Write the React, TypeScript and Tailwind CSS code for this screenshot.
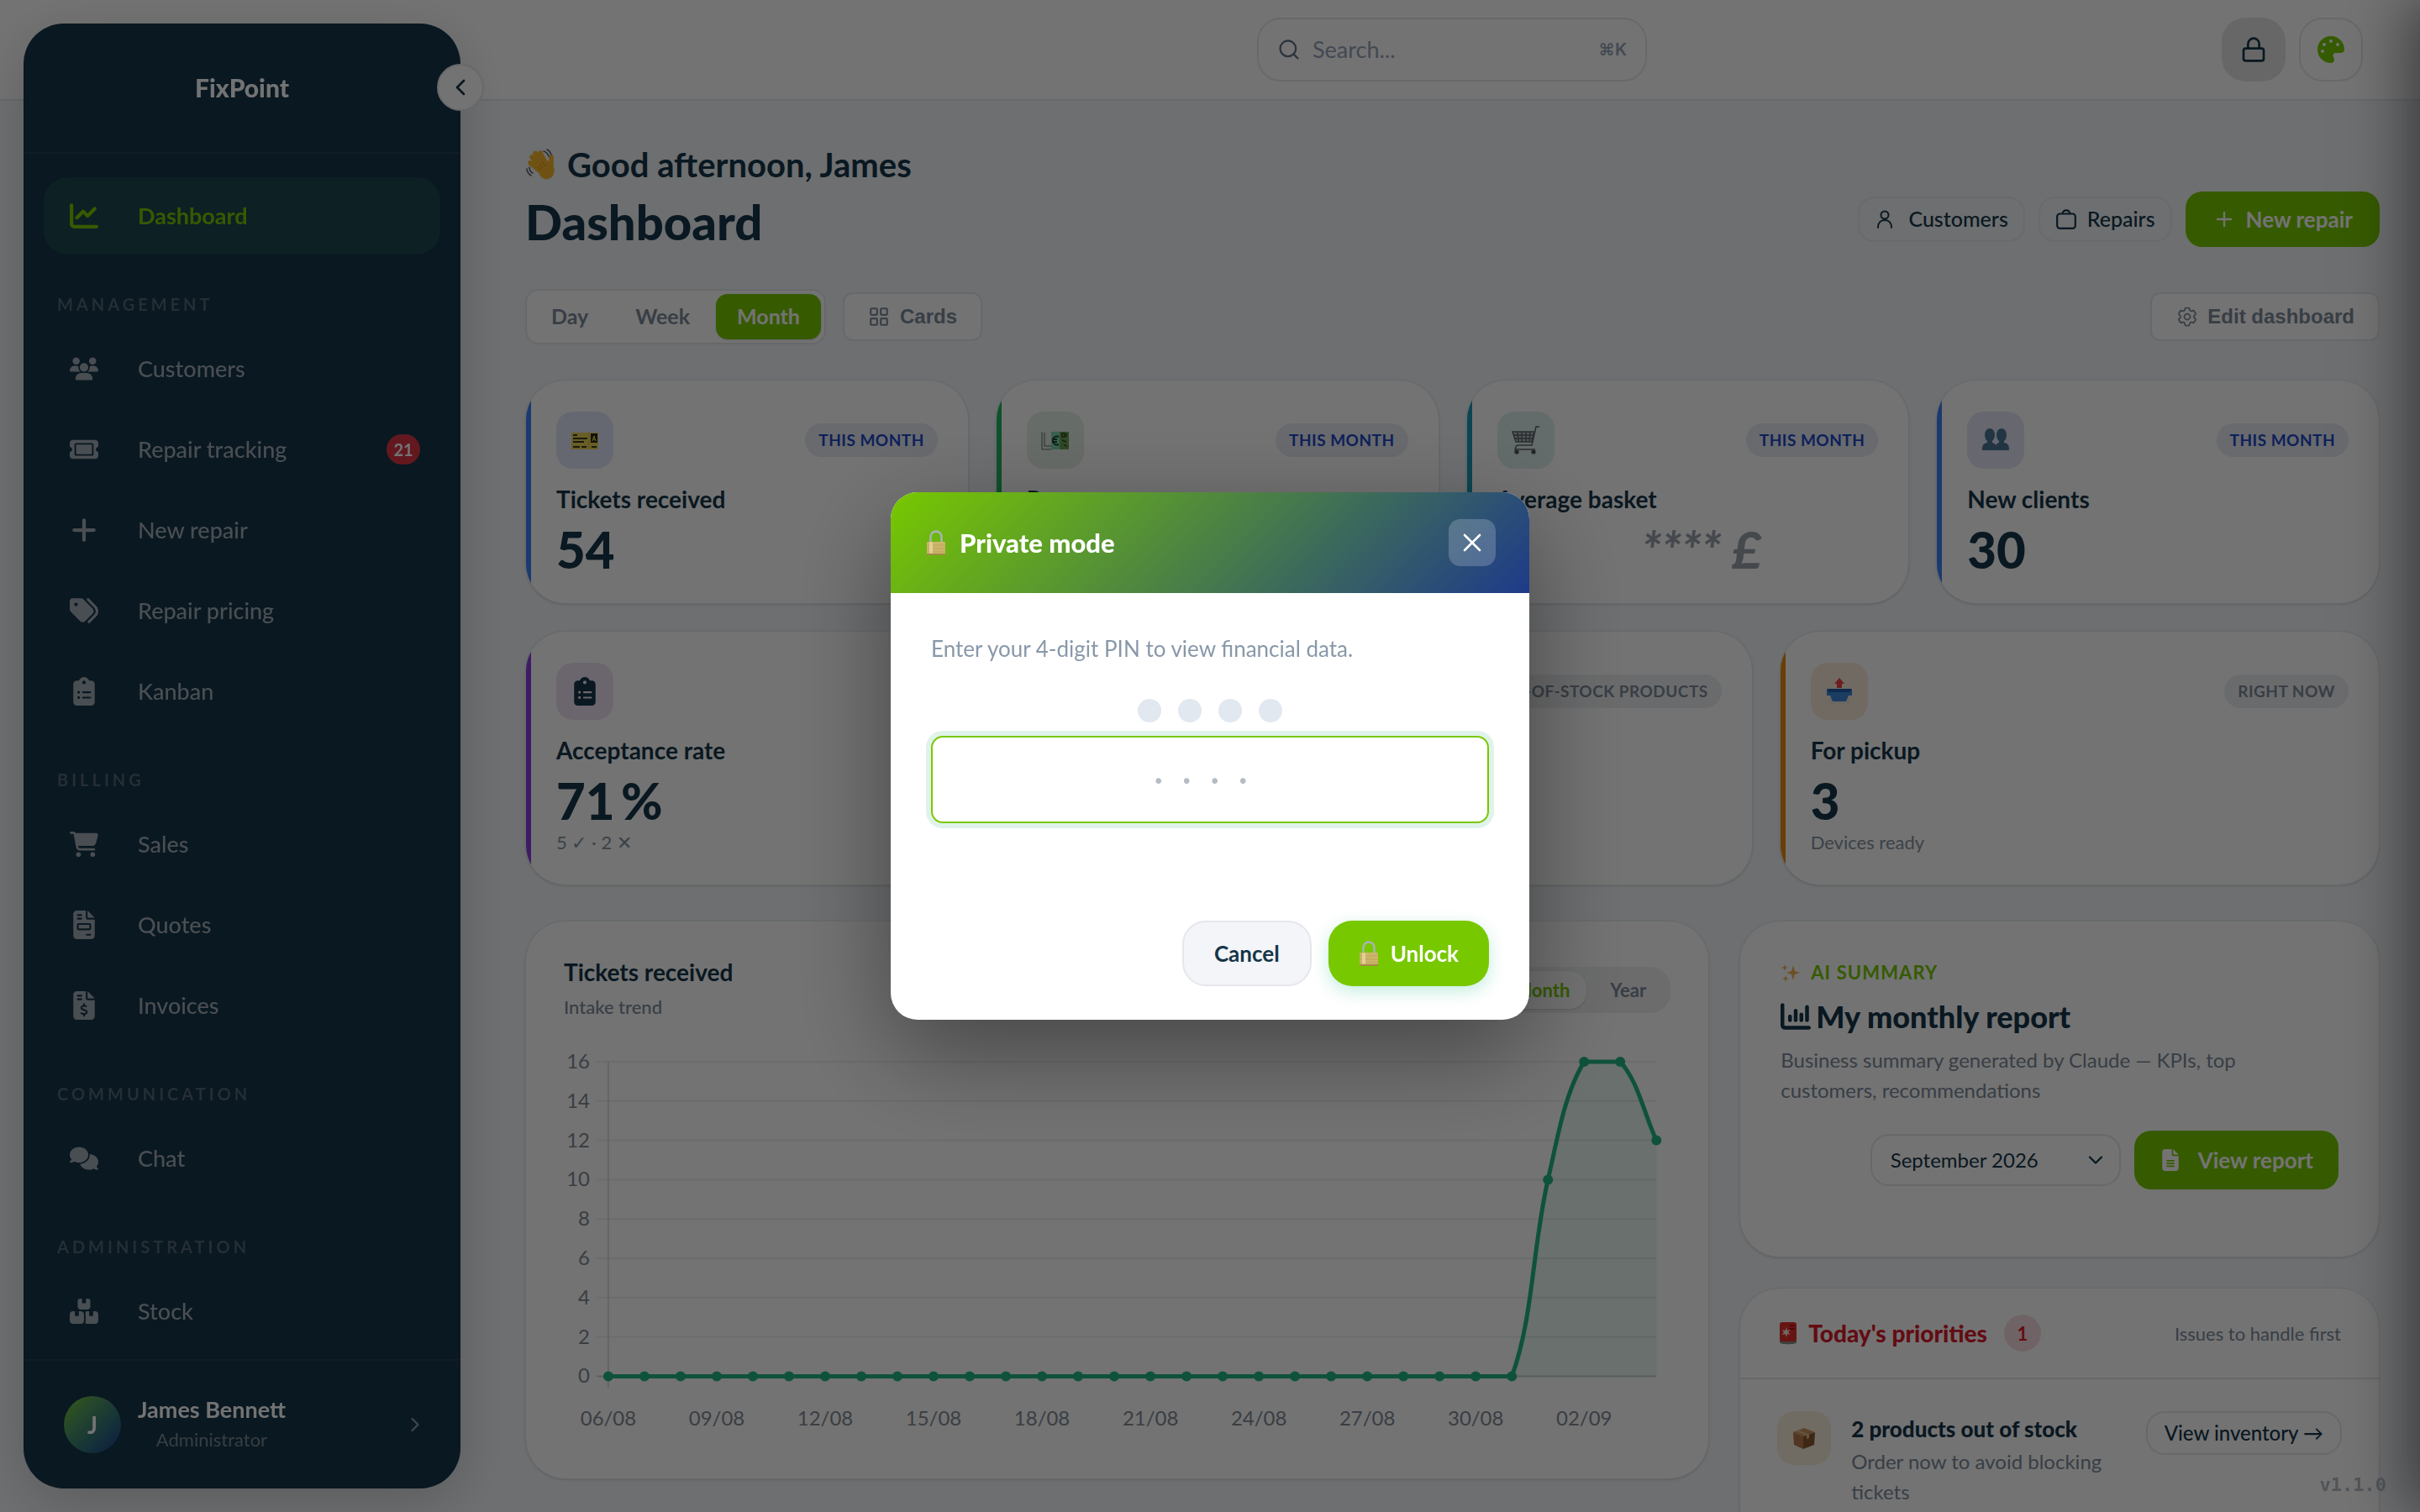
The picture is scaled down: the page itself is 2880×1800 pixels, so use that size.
import type { ReactElement, ReactNode } from 'react'
import type { IconType } from 'react-icons'
import {
  FaBoxesStacked,
  FaCartShopping,
  FaChartColumn,
  FaChartLine,
  FaClipboardList,
  FaComments,
  FaFileInvoice,
  FaFileInvoiceDollar,
  FaFileLines,
  FaPalette,
  FaPlus,
  FaTags,
  FaTicket,
  FaUsers,
} from 'react-icons/fa6'
import { HiOutlineCog6Tooth } from 'react-icons/hi2'
import { ChevronDown, ChevronLeft, ChevronRight, LayoutGrid, Lock, Plus, Search, X } from 'lucide-react'

/* ---------- small drawings ---------- */

function WaveIcon() {
  return (
    <svg viewBox="0 0 40 40" className="size-[40px]" aria-hidden="true">
      <g stroke="#f5b62a" strokeWidth="5.6" strokeLinecap="round">
        <path d="M19 24 8 11" />
        <path d="M22 22 12 6.500" />
        <path d="M26 21 18 6" />
        <path d="M17 27 6 18" />
        <path d="M31 22V11" />
      </g>
      <path d="M13 22l14-7 6 6c3 5 2 12-3 15-5 3-10 1-13-4z" fill="#f5b62a" />
      <path d="M17 19l4 5M20 16l4 6M15 23l4 4" stroke="#d98e12" strokeWidth="1" />
      <g stroke="#5b6470" strokeWidth="1.6" fill="none" strokeLinecap="round">
        <path d="M22 4c3 1 5 3 6 6" />
        <path d="M26 2c3 1 4 4 5 6" />
        <path d="M2 25c0 4 2 6 5 8" />
        <path d="M5 23c0 4 2 6 4 7" />
      </g>
    </svg>
  )
}

function TicketEmoji() {
  return (
    <svg viewBox="0 0 34 34" className="size-[34px]" aria-hidden="true">
      <rect x="1" y="8" width="32" height="20" fill="#e6d156" />
      <rect x="24" y="9" width="8" height="11" fill="#2c2a1a" />
      <path d="m26 18 2-6 2 6m-3.500-2h3" stroke="#f2dc5b" fill="none" />
      <path d="M3 11h5M3 15h17M3 19h13M3 25h8M13 25h6M25 25h6" stroke="#3b3820" strokeWidth="2" />
      <path d="M22 8v20" stroke="#c2ab35" strokeDasharray="2 2" />
    </svg>
  )
}

function MoneyEmoji() {
  return (
    <svg viewBox="0 0 34 34" className="size-[34px]" aria-hidden="true">
      <rect x="1" y="7" width="32" height="21" fill="#e3ece4" />
      <rect x="22" y="7" width="11" height="21" fill="#6aa155" />
      <rect x="12" y="7" width="10" height="21" fill="#7fd6ae" />
      <path d="M1 7v21h11M4 8v16h8" stroke="#5b6b60" fill="none" />
      <path d="M21 13a5 5 0 1 0 0 9M13 16h6M13 19h6" stroke="#1e4736" strokeWidth="2" fill="none" />
      <path d="M25 9v4h3V9zM30 9v4M27 22l4 3M25 17l5 2" stroke="#2b4a20" strokeWidth="1.500" fill="none" />
    </svg>
  )
}

function BasketEmoji() {
  return (
    <svg viewBox="0 0 36 36" className="size-[36px]" fill="none" stroke="#5d6468" strokeWidth="1.500" aria-hidden="true">
      <path d="M34 2h-4l-5 22H7" />
      <path d="M2 8h26l-3 12H6z" fill="#b9c2c4" />
      <path d="M3 12h24M4 16h22M8 8l1 12M13 8v12M18 8v12M23 8l-1 12" />
      <path d="M7 24l-2 5h24" />
      <circle cx="7" cy="32" r="2" fill="#3d4346" />
      <circle cx="27" cy="32" r="2" fill="#3d4346" />
    </svg>
  )
}

function PeopleEmoji() {
  return (
    <svg viewBox="0 0 34 34" className="size-[34px]" fill="#4b7595" aria-hidden="true">
      <ellipse cx="10" cy="11" rx="6" ry="8" />
      <path d="M7 16h6v4c4 1 5 3 5 9H1c0-6 1-8 6-9z" />
      <ellipse cx="24" cy="11" rx="6" ry="8" />
      <path d="M21 16h6v4c5 1 6 3 6 9H17c0-6 0-8 4-9z" />
    </svg>
  )
}

function OutboxEmoji() {
  return (
    <svg viewBox="0 0 34 34" className="size-[34px]" aria-hidden="true">
      <path d="M4 24h26v8H4z" fill="#efe6d8" />
      <path d="M2 14h30v8h-4l-3 7H9l-3-7H2z" fill="#3d87d9" />
      <path d="M3 14h28l-1 4H4z" fill="#1f5da8" />
      <path d="m17 1 6 7h-3v5h-6V8h-3z" fill="#ef4444" />
    </svg>
  )
}

function PadlockEmoji() {
  return (
    <svg viewBox="0 0 24 32" className="h-[32px] w-[24px]" aria-hidden="true">
      <path d="M5.500 16V9a6.500 6.500 0 0 1 13 0v7" fill="none" stroke="#a8b4b0" strokeWidth="2.500" />
      <rect x="1" y="15" width="22" height="16" rx="1.500" fill="#cdb56c" />
      <path d="M1 19h22M1 23h22M1 27h22" stroke="#bda55c" strokeWidth="1" />
      <rect x="1" y="29" width="22" height="2" fill="#a38a45" />
      <rect x="4" y="15.500" width="4" height="13" fill="#e2d193" />
    </svg>
  )
}

function SparklesEmoji() {
  return (
    <svg viewBox="0 0 24 24" className="size-[24px]" fill="#f0b455" aria-hidden="true">
      <path d="m15 3 2 7 6 2-6 2-2 7-2-7-6-2 6-2z" />
      <path d="m5 2 1 3 3 1-3 1-1 3-1-3-3-1 3-1zM6 15l1 3 3 1-3 1-1 3-1-3-3-1 3-1z" />
    </svg>
  )
}

function SirenEmoji() {
  return (
    <svg viewBox="0 0 24 28" className="h-[28px] w-[24px]" aria-hidden="true">
      <path d="M2 22h20v3c0 3-20 3-20 0z" fill="#8b8f86" />
      <rect x="2" y="1" width="20" height="23" rx="3" fill="#e5302a" />
      <path d="M14 5h6M14 9h6" stroke="#a31815" strokeWidth="2" />
      <path d="m10 7 1 4 4-1-3 3 3 3-4-1-1 4-1.500-4-4 1 2.500-3-2.500-3 4 1z" fill="#ffe5e0" />
    </svg>
  )
}

function PackageEmoji() {
  return (
    <svg viewBox="0 0 30 30" className="size-[30px]" aria-hidden="true">
      <path d="M2 8 14 13v15L3 23z" fill="#b5794a" />
      <path d="M28 8 14 13v15l13-5z" fill="#8a5730" />
      <path d="M2 8 15 3l13 5-14 5z" fill="#cb9362" />
      <path d="m8 5.500 13 5V15l-3 1v-4L5 7z" fill="#e3b88b" />
    </svg>
  )
}

function PersonIcon() {
  return (
    <svg viewBox="0 0 24 24" className="size-[24px]" fill="none" stroke="currentColor" strokeWidth="2" strokeLinecap="round" aria-hidden="true">
      <circle cx="12" cy="7" r="4.500" />
      <path d="M4 22c0-6 3.500-9 8-9s8 3 8 9" />
    </svg>
  )
}

function BagIcon() {
  return (
    <svg viewBox="0 0 24 24" className="size-[26px]" fill="none" stroke="currentColor" strokeWidth="2" strokeLinejoin="round" aria-hidden="true">
      <rect x="2" y="6" width="20" height="16" rx="3" />
      <path d="M8 6c0-5 8-5 8 0" />
    </svg>
  )
}

/* ---------- sidebar ---------- */

type NavItem = { label: string; icon: IconType; badge?: number }

const sections: { title: string; items: NavItem[] }[] = [
  {
    title: 'Management',
    items: [
      { label: 'Customers', icon: FaUsers },
      { label: 'Repair tracking', icon: FaTicket, badge: 21 },
      { label: 'New repair', icon: FaPlus },
      { label: 'Repair pricing', icon: FaTags },
      { label: 'Kanban', icon: FaClipboardList },
    ],
  },
  {
    title: 'Billing',
    items: [
      { label: 'Sales', icon: FaCartShopping },
      { label: 'Quotes', icon: FaFileInvoice },
      { label: 'Invoices', icon: FaFileInvoiceDollar },
    ],
  },
  { title: 'Communication', items: [{ label: 'Chat', icon: FaComments }] },
  { title: 'Administration', items: [{ label: 'Stock', icon: FaBoxesStacked }] },
]

function NavLink({ item, active = false }: { item: NavItem; active?: boolean }) {
  const Icon = item.icon
  return (
    <a
      href="#"
      className={`flex h-[92px] items-center rounded-[28px] pr-6 pl-7 text-[27px] ${
        active ? 'bg-[#1e4751] font-bold text-[#78c800]' : 'font-medium text-[#a3adb6]'
      }`}
    >
      <span className="mr-11 flex w-10 justify-center">
        <Icon className="size-[34px]" />
      </span>
      {item.label}
      {item.badge && (
        <span className="ml-auto flex h-9 w-10 items-center justify-center rounded-full bg-[#dc3545] text-[20px] font-bold text-white">
          {item.badge}
        </span>
      )}
    </a>
  )
}

function Sidebar() {
  return (
    <aside className="fixed top-7 bottom-7 left-7 z-20 flex w-[520px] flex-col rounded-[48px] bg-[#163549] shadow-[0_16px_64px_rgba(0,0,0,0.18)]">
      <div className="flex h-[155px] items-center justify-center border-b-2 border-white/5 text-[30px] font-black text-white">
        FixPoint
      </div>
      <button
        aria-label="Collapse sidebar"
        className="absolute top-[48px] -right-7 flex size-14 items-center justify-center rounded-full border-2 border-gray-200 bg-white text-[#163549]"
      >
        <ChevronLeft className="size-8" />
      </button>
      <nav className="flex-1 overflow-hidden px-6 pt-7">
        <NavLink item={{ label: 'Dashboard', icon: FaChartLine }} active />
        {sections.map((section) => (
          <div key={section.title}>
            <h2 className="pt-[46px] pb-[18px] pl-4 text-[20px] leading-[26px] font-bold tracking-[0.2em] text-[#526675] uppercase">
              {section.title}
            </h2>
            <div className="flex flex-col gap-1">
              {section.items.map((item) => (
                <NavLink key={item.label} item={item} />
              ))}
            </div>
          </div>
        ))}
      </nav>
      <button className="flex h-[154px] items-center border-t-2 border-white/5 pr-10 pl-12">
        <span className="mr-5 flex size-[68px] items-center justify-center rounded-full bg-linear-to-br from-[#78c800] to-[#1e3a8a] text-[28px] font-bold text-white">
          J
        </span>
        <span className="flex flex-col">
          <span className="text-[27px] leading-9 font-bold text-white">James Bennett</span>
          <span className="text-[22px] leading-9 text-[#7b8995]">Administrator</span>
        </span>
        <ChevronRight className="ml-auto size-7 text-[#8f9aa5]" />
      </button>
    </aside>
  )
}

/* ---------- top of the page ---------- */

function TopBar() {
  return (
    <header className="grid h-[120px] grid-cols-[1fr_464px_1fr] items-center border-b-2 border-gray-200 bg-white pr-[68px] pl-[644px]">
      <label className="col-start-2 flex h-[76px] items-center gap-[14px] rounded-[28px] border-2 border-gray-200 px-[22px] text-[#94a3b8]">
        <Search className="size-7 text-[#64748b]" />
        <input
          aria-label="Search"
          placeholder="Search..."
          className="min-w-0 flex-1 text-[27px] outline-none placeholder:text-[#94a3b8]"
        />
        <kbd className="font-['Inter'] text-[20px] font-semibold">⌘K</kbd>
      </label>
      <div className="flex justify-end gap-4">
        <button
          aria-label="Private mode"
          className="flex size-[76px] items-center justify-center rounded-[28px] bg-neutral-200 text-[#163549]"
        >
          <Lock className="size-8" />
        </button>
        <button
          aria-label="Theme"
          className="flex size-[76px] items-center justify-center rounded-[28px] border-2 border-gray-200 text-[#78c800]"
        >
          <FaPalette className="size-8" />
        </button>
      </div>
    </header>
  )
}

function PageHeader() {
  return (
    <div className="flex items-end justify-between">
      <div>
        <p className="flex items-center gap-[10px] text-[40px] leading-[48px] font-bold">
          <WaveIcon />
          Good afternoon, James
        </p>
        <h1 className="mt-3 text-[58px] leading-[64px] font-black">Dashboard</h1>
      </div>
      <div className="mb-[2px] flex items-center gap-4">
        <a href="#" className="flex h-[54px] items-center gap-4 rounded-[20px] border-2 border-[#e6eaef] px-[18px] text-[25px] font-medium">
          <PersonIcon />
          Customers
        </a>
        <a href="#" className="flex h-[54px] items-center gap-3 rounded-[20px] border-2 border-[#e6eaef] px-[18px] text-[25px] font-medium">
          <BagIcon />
          Repairs
        </a>
        <button className="flex h-[66px] items-center gap-3 rounded-[20px] bg-[#78c800] px-8 text-[26px] font-bold text-white">
          <Plus className="size-7" />
          New repair
        </button>
      </div>
    </div>
  )
}

function Toolbar() {
  return (
    <div className="mt-12 flex h-[66px] items-center gap-5 text-[#7c8a99]">
      <div className="flex items-center gap-[6px] rounded-2xl border-2 border-gray-200 bg-white p-1 text-[25px] font-bold">
        <button className="h-[54px] rounded-[14px] px-[25px]">Day</button>
        <button className="h-[54px] rounded-[14px] px-[25px]">Week</button>
        <button className="h-[54px] rounded-[14px] bg-[#78c800] px-[25px] text-white shadow-sm">Month</button>
      </div>
      <button className="flex h-[58px] items-center gap-3 rounded-xl border-2 border-gray-200 bg-white px-7 font-['Liberation_Sans'] text-[24px] font-bold">
        <LayoutGrid className="size-[26px]" />
        Cards
      </button>
      <button className="ml-auto flex h-[58px] items-center gap-[10px] rounded-xl border-2 border-gray-200 bg-white px-7 font-['Liberation_Sans'] text-[24px] font-bold">
        <HiOutlineCog6Tooth className="size-7" />
        Edit dashboard
      </button>
    </div>
  )
}

/* ---------- KPI cards ---------- */

type Kpi = {
  label: string
  value: ReactNode
  sub?: string
  badge: string
  neutral?: boolean
  accent: string
  tile: string
  icon: ReactNode
}

const hiddenAmount = <span className="block pl-[172px] text-[#9aa3ae] italic">**** £</span>

const monthly: Kpi[] = [
  { label: 'Tickets received', value: '54', badge: 'This month', accent: 'bg-[#3b82f6]', tile: 'bg-[#e2e6fa]', icon: <TicketEmoji /> },
  { label: 'Revenue', value: hiddenAmount, badge: 'This month', accent: 'bg-[#22b55e]', tile: 'bg-[#e3efe6]', icon: <MoneyEmoji /> },
  { label: 'Average basket', value: hiddenAmount, badge: 'This month', accent: 'bg-[#1899b5]', tile: 'bg-[#deeeee]', icon: <BasketEmoji /> },
  { label: 'New clients', value: '30', badge: 'This month', accent: 'bg-[#3b82f6]', tile: 'bg-[#e2e5f5]', icon: <PeopleEmoji /> },
]

const current: Kpi[] = [
  {
    label: 'Acceptance rate',
    value: '71\u2009%',
    sub: '5 ✓ · 2 ✕',
    badge: 'This month',
    accent: 'bg-[#8b3fe0]',
    tile: 'bg-[#eee2f4]',
    icon: <FaClipboardList className="size-[34px]" />,
  },
  {
    label: 'Stock alerts',
    value: '2',
    badge: 'Out-of-stock products',
    neutral: true,
    accent: 'bg-[#ef4444]',
    tile: 'bg-[#f8e0e0]',
    icon: <PackageEmoji />,
  },
  {
    label: 'For pickup',
    value: '3',
    sub: 'Devices ready',
    badge: 'Right now',
    neutral: true,
    accent: 'bg-[#ea8a0c]',
    tile: 'bg-[#f8ecdc]',
    icon: <OutboxEmoji />,
  },
]

function KpiCard({ kpi }: { kpi: Kpi }) {
  return (
    <article className="relative overflow-hidden rounded-[48px] border border-[#e2e7ed] bg-white px-9 pt-[37px] pb-8 shadow-sm">
      <span className={`absolute inset-y-0 left-0 w-[6px] ${kpi.accent}`} />
      <div className="flex items-center justify-between">
        <span className={`flex size-[68px] items-center justify-center rounded-[20px] ${kpi.tile}`}>{kpi.icon}</span>
        <span
          className={`flex h-10 items-center rounded-full px-4 text-[19px] font-bold tracking-wide uppercase ${
            kpi.neutral ? 'bg-[#eceef0] text-[#7c8a99]' : 'bg-[#e6eaf3] text-[#1d48c8]'
          }`}
        >
          {kpi.badge}
        </span>
      </div>
      <h3 className="mt-[18px] text-[28px] leading-9 font-bold">{kpi.label}</h3>
      <p className="mt-[10px] text-[60px] leading-[64px] font-black">{kpi.value}</p>
      {kpi.sub && <p className="text-[22px] leading-9 text-[#8492a0]">{kpi.sub}</p>}
    </article>
  )
}

/* ---------- trend chart ---------- */

const tickets = [...Array(26).fill(0), 10, 16, 16, 12] as number[]
const dates = ['06/08', '09/08', '12/08', '15/08', '18/08', '21/08', '24/08', '27/08', '30/08', '02/09']
const left = 53
const right = 1302
const top = 24
const base = 399
const tension = 0.35

const points = tickets.map((v, i) => ({
  x: left + (i * (right - left)) / (tickets.length - 1),
  y: base - (v * (base - top)) / 16,
}))

const clampY = (y: number) => Math.min(base, Math.max(top, y))

function controls(i: number) {
  const p = points[i]
  const prev = points[i - 1] ?? p
  const next = points[i + 1] ?? p
  const before = Math.hypot(p.x - prev.x, p.y - prev.y)
  const after = Math.hypot(next.x - p.x, next.y - p.y)
  const a = (tension * before) / (before + after)
  const b = (tension * after) / (before + after)
  return {
    inX: p.x - a * (next.x - prev.x),
    inY: clampY(p.y - a * (next.y - prev.y)),
    outX: p.x + b * (next.x - prev.x),
    outY: clampY(p.y + b * (next.y - prev.y)),
  }
}

const line = points
  .map((p, i) => {
    if (i === 0) return `M${p.x} ${p.y}`
    const from = controls(i - 1)
    const to = controls(i)
    return `C${from.outX} ${from.outY} ${to.inX} ${to.inY} ${p.x} ${p.y}`
  })
  .join('')

function TrendChart() {
  return (
    <svg viewBox="0 0 1319 470" className="mt-5 w-full" role="img" aria-label="Intake trend">
      {[0, 2, 4, 6, 8, 10, 12, 14, 16].map((v) => {
        const y = base - (v * (base - top)) / 16
        return (
          <g key={v}>
            <path d={`M${left - 14} ${y}H${right}`} stroke={v === 0 ? '#c9ced4' : '#edeff1'} strokeWidth="2" />
            <text x="31" y={y + 8} textAnchor="end" fontSize="24" fill="#808a94">
              {v}
            </text>
          </g>
        )
      })}
      <path d={`M${left} ${top}V${base + 14}`} stroke="#dcdfe3" strokeWidth="2" />
      <path d={`${line}V${base}H${left}Z`} fill="#1fb885" fillOpacity="0.1" />
      <path d={line} fill="none" stroke="#22b582" strokeWidth="5" />
      {points.map((p) => (
        <circle key={p.x} cx={p.x} cy={p.y} r="6" fill="#22b582" />
      ))}
      {dates.map((d, i) => (
        <text key={d} x={points[i * 3].x} y="458" textAnchor="middle" fontSize="24" fill="#808a94">
          {d}
        </text>
      ))}
    </svg>
  )
}

function ChartCard() {
  return (
    <section className="rounded-[48px] border border-[#e2e7ed] bg-white px-[45px] pt-[39px] pb-[51px] shadow-sm">
      <div className="flex items-center justify-between">
        <div>
          <h2 className="text-[28px] leading-[42px] font-bold">Tickets received</h2>
          <p className="text-[22px] leading-[42px] font-medium text-[#7c8a99]">Intake trend</p>
        </div>
        <div className="flex items-center gap-1 rounded-3xl bg-[#eff0f2] p-[5px] text-[22px] font-bold text-[#7c8a99]">
          <button className="h-[45px] px-6">Day</button>
          <button className="h-[45px] px-6">Week</button>
          <button className="h-[45px] rounded-[20px] bg-white px-5 text-[#78c800] shadow-sm">Month</button>
          <button className="h-[45px] px-6">Year</button>
        </div>
      </div>
      <TrendChart />
    </section>
  )
}

/* ---------- right column ---------- */

function ReportCard() {
  return (
    <section className="rounded-[48px] border border-[#e2e7ed] bg-white px-12 pt-[43px] pb-20 shadow-sm">
      <p className="flex items-center gap-3 text-[22px] leading-9 font-bold tracking-wider text-[#78c800] uppercase">
        <SparklesEmoji />
        AI summary
      </p>
      <h2 className="mt-2 flex items-center gap-[6px] text-[36px] leading-[52px] font-black">
        <FaChartColumn className="size-9" />
        My monthly report
      </h2>
      <p className="mt-2 max-w-[600px] text-[24px] leading-9 text-[#7c8a99]">
        Business summary generated by Claude — KPIs, top customers, recommendations
      </p>
      <div className="mt-[30px] flex items-center justify-end gap-4">
        <div className="relative w-[298px]">
          <select
            aria-label="Report month"
            className="h-[62px] w-full appearance-none rounded-[22px] border-2 border-gray-200 bg-white px-[22px] text-[24px]"
          >
            <option>September 2026</option>
          </select>
          <ChevronDown className="pointer-events-none absolute top-[17px] right-4 size-7" />
        </div>
        <button className="flex h-[70px] items-center gap-5 rounded-[20px] bg-[#78c800] px-[30px] text-[26px] font-bold text-white">
          <FaFileLines className="size-[26px]" />
          View report
        </button>
      </div>
    </section>
  )
}

function PrioritiesCard() {
  return (
    <section className="rounded-[48px] border border-[#e2e7ed] bg-white shadow-sm">
      <div className="flex h-[108px] items-center border-b-2 border-gray-200 px-[45px]">
        <SirenEmoji />
        <h2 className="ml-3 text-[28px] font-black text-[#d91c2c]">Today's priorities</h2>
        <span className="ml-5 flex size-11 items-center justify-center rounded-full bg-[#f8dcdf] text-[22px] font-bold text-[#d91c2c]">
          1
        </span>
        <span className="ml-auto text-[22px] text-[#7c8a99]">Issues to handle first</span>
      </div>
      <div className="flex items-start px-11 pt-[38px] pb-12">
        <span className="mr-6 flex size-16 shrink-0 items-center justify-center rounded-[20px] bg-[#f8f0dc]">
          <PackageEmoji />
        </span>
        <div className="max-w-[320px] flex-1">
          <h3 className="text-[26px] leading-[42px] font-black">2 products out of stock</h3>
          <p className="text-[24px] leading-9 text-[#7c8a99]">Order now to avoid blocking tickets</p>
        </div>
        <a href="#" className="ml-auto flex h-[52px] shrink-0 items-center rounded-[22px] border-2 border-gray-200 px-5 text-[24px] font-medium">
          View inventory →
        </a>
      </div>
    </section>
  )
}

/* ---------- PIN dialog ---------- */

function PinDialog() {
  return (
    <div className="fixed inset-0 z-40 flex items-center justify-center bg-black/55">
      <div
        role="dialog"
        aria-labelledby="pin-title"
        className="w-[760px] overflow-hidden rounded-[32px] bg-white shadow-[0_40px_120px_rgba(0,0,0,0.4)]"
      >
        <div className="flex h-[120px] items-center justify-between bg-linear-[135deg,#78c800,#1e3a8a] pr-10 pl-[42px] text-white">
          <h2 id="pin-title" className="flex items-center gap-4 text-[31px] font-black">
            <PadlockEmoji />
            Private mode
          </h2>
          <button aria-label="Close" className="flex size-14 items-center justify-center rounded-[14px] bg-white/20">
            <X className="size-9" strokeWidth={1.75} />
          </button>
        </div>
        <div className="px-12 pt-[46px] pb-10">
          <label htmlFor="pin" className="block text-[26px] leading-10 text-[#8898a9]">
            Enter your 4-digit PIN to view financial data.
          </label>
          <div className="mt-10 flex justify-center gap-5">
            <span className="size-7 rounded-full bg-[#e2e8f0]" />
            <span className="size-7 rounded-full bg-[#e2e8f0]" />
            <span className="size-7 rounded-full bg-[#e2e8f0]" />
            <span className="size-7 rounded-full bg-[#e2e8f0]" />
          </div>
          <input
            id="pin"
            placeholder="····"
            maxLength={4}
            className="mt-4 h-[104px] w-full rounded-[14px] border-2 border-[#78c800] pb-1 text-center text-[44px] tracking-[0.5em] ring-6 ring-[#e0f3ea] outline-none placeholder:text-[#b4bcc6]"
          />
          <div className="mt-[116px] flex justify-end gap-5">
            <button className="h-[78px] rounded-[28px] border-2 border-gray-200 bg-[#f3f5f8] px-9 text-[26px] font-bold">
              Cancel
            </button>
            <button className="flex h-[78px] items-center gap-[14px] rounded-[28px] bg-[#78c800] px-9 text-[26px] font-bold text-white shadow-[0_6px_20px_rgba(16,185,129,0.25)]">
              <PadlockEmoji />
              Unlock
            </button>
          </div>
        </div>
      </div>
    </div>
  )
}

export default function App(): ReactElement {
  return (
    <div className="relative h-screen overflow-hidden bg-[#f1f5f9] font-['Lato','Noto_Sans',sans-serif] text-[#163549]">
      <TopBar />
      <Sidebar />
      <main className="ml-[577px] px-12 pt-[52px]">
        <PageHeader />
        <Toolbar />
        <div className="mt-[42px] grid grid-cols-4 gap-8">
          {monthly.map((kpi) => (
            <KpiCard key={kpi.label} kpi={kpi} />
          ))}
        </div>
        <div className="mt-8 grid grid-cols-3 gap-8">
          {current.map((kpi) => (
            <KpiCard key={kpi.label} kpi={kpi} />
          ))}
        </div>
        <div className="mt-[42px] grid grid-cols-[1.85fr_1fr] items-start gap-9">
          <ChartCard />
          <div className="flex flex-col gap-9">
            <ReportCard />
            <PrioritiesCard />
          </div>
        </div>
      </main>
      <span className="fixed right-10 bottom-4 font-['DejaVu_Sans_Mono'] text-[22px] font-bold text-[#b4bcc5]">v1.1.0</span>
      <div className="fixed inset-y-0 left-full w-[600px] shadow-[-12px_0_70px_rgba(0,0,0,0.5)]" />
      <PinDialog />
    </div>
  )
}
